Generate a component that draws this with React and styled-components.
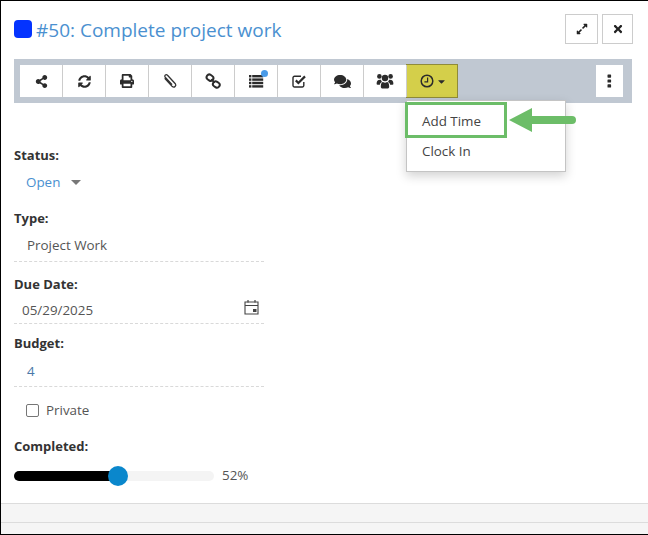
import React from "react";
import styled, { createGlobalStyle } from "styled-components";
import { FaShareAlt, FaSyncAlt, FaPrint, FaComments, FaExpandAlt, FaTimes, FaCaretDown } from "react-icons/fa";

const Global = createGlobalStyle`
  html, body { margin: 0; padding: 0; background: #fff; }
  body { font-family: "Open Sans", "Noto Sans", "Liberation Sans", sans-serif; font-size: 13.4px; color: #444; }
  * { box-sizing: border-box; }
`;

const Frame = styled.div`
  width: 648px; height: 535px; display: flex; flex-direction: column; overflow: hidden;
  border-top: 1px solid #000; border-left: 1px solid #000; border-bottom: 1px solid #000;
`;
const Body = styled.div`flex: none; height: 502px; padding: 13px 0 0 13px; position: relative;`;
const Header = styled.div`display: flex; align-items: center; height: 30px; padding-right: 15px;`;
const Swatch = styled.span`width: 18px; height: 18px; border-radius: 4px; background: #0433ff; margin-right: 4px; flex: none;`;
const Title = styled.h1`margin: 0; font-size: 19px; font-weight: 400; color: #4a90d0; flex: 1; white-space: nowrap; line-height: 30px; position: relative; top: 1px;`;
const HeadBtn = styled.button`
  width: ${p => p.$w}px; height: 30px; margin-left: ${p => p.$ml}px; background: #fff; border: 1px solid #ccc; padding: 0;
  display: flex; align-items: center; justify-content: center; color: #222;
`;
const Toolbar = styled.div`
  margin-top: 15px; width: 618px; height: 44px; background: #c0c8d2; padding: 6px 9px 6px 6px; display: flex; align-items: center;
`;
const ToolBtn = styled.button`
  width: 43px; height: 32px; background: #fff; border: 0; border-right: 1px solid #ccc; padding: 0; position: relative;
  display: flex; align-items: center; justify-content: center; color: #2b2b2b; flex: none;
`;
const ActiveBtn = styled.button`
  width: 52px; height: 34px; margin-left: -1px; background: #d4cf4a; border: 1px solid #8f8b3a; padding: 0 0 0 3px; display: flex; align-items: center; justify-content: center; gap: 2px; color: #2b2b2b; flex: none;
`;
const KebabBtn = styled(ToolBtn)`width: 27px; border: 0; margin-left: auto;`;
const Badge = styled.span`position: absolute; top: 5px; right: 9px; width: 7px; height: 7px; background: #4a9be8; border-radius: 50%;`;
const Menu = styled.div`
  position: absolute; left: 405px; top: 99px; width: 160px; height: 72px; background: #fff; border: 1px solid #c4c4c4;
  box-shadow: 0 4px 10px rgba(0,0,0,.18); padding-top: 1px;
`;
const MenuItem = styled.div`
  height: 27px; line-height: 27px; padding-left: 15px; color: #444; font-size: 13.4px;
`;
const Highlight = styled(MenuItem)`
  position: relative; width: 102px; height: 36px; line-height: 32px; margin: 0 0 0 -2px; border: 3px solid #6cbd68; padding-left: 14px; white-space: nowrap;
`;
const Arrow = styled.svg`position: absolute; left: 506px; top: 105px;`;
const Form = styled.div`width: 250px; padding-top: 42px;`;
const Label = styled.div`font-weight: 700; color: #333; font-size: 13px; height: 20px; line-height: 20px;`;
const Status = styled.div`height: 43px; padding: 7px 0 0 12px; display: flex; align-items: flex-start; gap: 11px; line-height: 20px; color: #4a90d0;`;
const Caret = styled.span`margin-top: 8px; width: 0; height: 0; border-left: 5px solid transparent; border-right: 5px solid transparent; border-top: 5px solid #777;`;
const Field = styled.div`
  height: ${p => p.$h}px; border-bottom: 1px dashed #d9d9d9; padding: ${p => p.$pt}px 0 0 ${p => p.$pl}px; line-height: 20px; color: ${p => p.$c || "#555"};
  display: flex; justify-content: space-between; margin-bottom: ${p => p.$mb}px;
`;
const CalIcon = styled.svg`margin-right: 5px; position: relative; top: -1px;`;
const CheckRow = styled.label`display: flex; align-items: center; height: 20px; margin: 13px 0 16px 12px; gap: 7px; color: #555;`;
const CheckBox = styled.span`width: 13px; height: 13px; border: 1px solid #767676; border-radius: 2px; background: #fff;`;
const SliderRow = styled.div`display: flex; align-items: center; margin-top: 10px; height: 20px;`;
const Track = styled.div`position: relative; width: 200px; height: 10px; border-radius: 5px; background: #f4f4f4;`;
const Fill = styled.div`height: 10px; border-radius: 5px; background: #000;`;
const Thumb = styled.span`position: absolute; top: -5px; left: 94px; width: 20px; height: 20px; border-radius: 50%; background: #0a87cc;`;
const Pct = styled.span`margin-left: 8px; color: #555; position: relative; top: -1px;`;
const Footer = styled.div`flex: 1; background: #f5f5f5; border-top: 1px solid #dcdcdc;`;
const FooterLine = styled.div`height: 19px; border-bottom: 1px solid #dcdcdc;`;

const Ico = ({ children, w = 16, h = 16, ...rest }) => (
  <svg width={w} height={h} viewBox={`0 0 ${w} ${h}`} {...rest}>{children}</svg>
);
const ClipIcon = () => (
  <Ico>
    <path d="M3.2 5.2 L10.8 13.6 a2.1 2.1 0 0 0 3 -2.9 L6 2.2 a1.5 1.5 0 0 0 -2.3 2 L10.6 11.6" fill="none" stroke="#333" strokeWidth="1.3" transform="translate(-0.5 0)" />
  </Ico>
);
const LinkIcon = () => (
  <Ico>
    <g fill="none" stroke="#2b2b2b" strokeWidth="2">
      <rect x="1.5" y="2" width="7" height="5.4" rx="2.7" transform="rotate(35 5 4.7)" />
      <rect x="7.8" y="8.8" width="7" height="5.4" rx="2.7" transform="rotate(35 11.3 11.5)" />
    </g>
    <path d="M6.5 6 L9.5 10" stroke="#2b2b2b" strokeWidth="2" />
  </Ico>
);
const ListIcon = () => (
  <Ico>
    <g fill="#2b2b2b">
      {[2, 5.4, 8.8, 12.2].map(y => (
        <React.Fragment key={y}>
          <rect x="1" y={y} width="2.4" height="2.4" />
          <rect x="4.2" y={y} width="11" height="2.4" />
        </React.Fragment>
      ))}
    </g>
  </Ico>
);
const CheckIcon = () => (
  <Ico>
    <path d="M12.8 9 V12.5 a1.5 1.5 0 0 1 -1.5 1.5 H3.5 A1.5 1.5 0 0 1 2 12.5 V4.7 A1.5 1.5 0 0 1 3.5 3.2 H10" fill="none" stroke="#2b2b2b" strokeWidth="1.4" />
    <path d="M4.8 7.4 L7.4 10 L14 3.4" fill="none" stroke="#2b2b2b" strokeWidth="2.2" />
  </Ico>
);
const UsersIcon = () => (
  <Ico w={18} h={17}>
    <g fill="#2b2b2b">
      <circle cx="9" cy="5" r="3.2" />
      <circle cx="3.4" cy="3.4" r="2.3" />
      <circle cx="14.6" cy="3.4" r="2.3" />
      <path d="M0.6 11 C0.6 7.5 2 6.5 5 6.8 C5.2 8 5.8 8.6 6 9 C4.8 9.4 4 10.4 3.9 11.8 H1.6 A1 1 0 0 1 0.6 11Z" />
      <path d="M17.4 11 C17.4 7.5 16 6.5 13 6.8 C12.8 8 12.2 8.6 12 9 C13.2 9.4 14 10.4 14.1 11.8 H16.4 A1 1 0 0 0 17.4 11Z" />
      <path d="M4.8 13.6 C4.8 10.4 6 9 7 9 C8.2 10 9.8 10 11 9 C12 9 13.2 10.4 13.2 13.6 C13.2 15 12.4 15.6 11.4 15.6 H6.6 C5.6 15.6 4.8 15 4.8 13.6Z" />
    </g>
  </Ico>
);
const ClockIcon = () => (
  <Ico w={14} h={14}>
    <circle cx="7" cy="7" r="5.8" fill="none" stroke="#2b2b2b" strokeWidth="1.5" />
    <path d="M7.6 3.4 V7.8 H4.4" fill="none" stroke="#2b2b2b" strokeWidth="1.2" />
  </Ico>
);
const DotsIcon = () => (
  <Ico w={5} h={14}>
    <g fill="#2b2b2b">
      <rect x="0.5" y="0.5" width="3.6" height="3.2" rx="0.6" />
      <rect x="0.5" y="5.4" width="3.6" height="3.2" rx="0.6" />
      <rect x="0.5" y="10.3" width="3.6" height="3.2" rx="0.6" />
    </g>
  </Ico>
);

const tools = [
  [<FaShareAlt size={13} />], [<FaSyncAlt size={13} />], [<FaPrint size={14} />], [<ClipIcon />], [<LinkIcon />],
  [<ListIcon />, true], [<CheckIcon />], [<FaComments size={17} />], [<UsersIcon />],
];

export default function App() {
  return (
    <Frame>
      <Global />
      <Body>
        <Header>
          <Swatch />
          <Title>#50: Complete project work</Title>
          <HeadBtn $w={33} $ml={0}><FaExpandAlt size={12} /></HeadBtn>
          <HeadBtn $w={31} $ml={4}><FaTimes size={12} /></HeadBtn>
        </Header>
        <Toolbar>
          {tools.map(([icon, badge], i) => (
            <ToolBtn key={i}>{icon}{badge && <Badge />}</ToolBtn>
          ))}
          <ActiveBtn><ClockIcon /><FaCaretDown size={11} /></ActiveBtn>
          <KebabBtn><DotsIcon /></KebabBtn>
        </Toolbar>
        <Menu>
          <Highlight>Add Time</Highlight>
          <MenuItem>Clock In</MenuItem>
        </Menu>
        <Arrow width="72" height="28" viewBox="0 0 72 28">
          <path d="M2 14 L25 2 V10 H65 a4 4 0 0 1 0 8 H25 V26 Z" fill="#6cbd68" />
        </Arrow>
        <Form>
          <Label>Status:</Label>
          <Status>Open<Caret /></Status>
          <Label>Type:</Label>
          <Field $h={34} $pt={7} $pl={13} $mb={12}>Project Work</Field>
          <Label>Due Date:</Label>
          <Field $h={30} $pt={6} $pl={8} $mb={9}>
            05/29/2025
            <CalIcon width="15" height="16" viewBox="0 0 15 16">
              <path d="M1 3 H14 V15 H1 Z M1 6.5 H14" fill="none" stroke="#444" strokeWidth="1.1" />
              <path d="M4 1 V3.5 M11 1 V3.5" stroke="#444" strokeWidth="1.2" />
              <rect x="9" y="10" width="3.5" height="3" fill="#444" />
            </CalIcon>
          </Field>
          <Label>Budget:</Label>
          <Field $h={34} $pt={8} $pl={13} $c="#4a78a8" $mb={0}>4</Field>
          <CheckRow><CheckBox />Private</CheckRow>
          <Label>Completed:</Label>
          <SliderRow>
            <Track><Fill style={{ width: "52%" }} /><Thumb /></Track>
            <Pct>52%</Pct>
          </SliderRow>
        </Form>
      </Body>
      <Footer><FooterLine /></Footer>
    </Frame>
  );
}
